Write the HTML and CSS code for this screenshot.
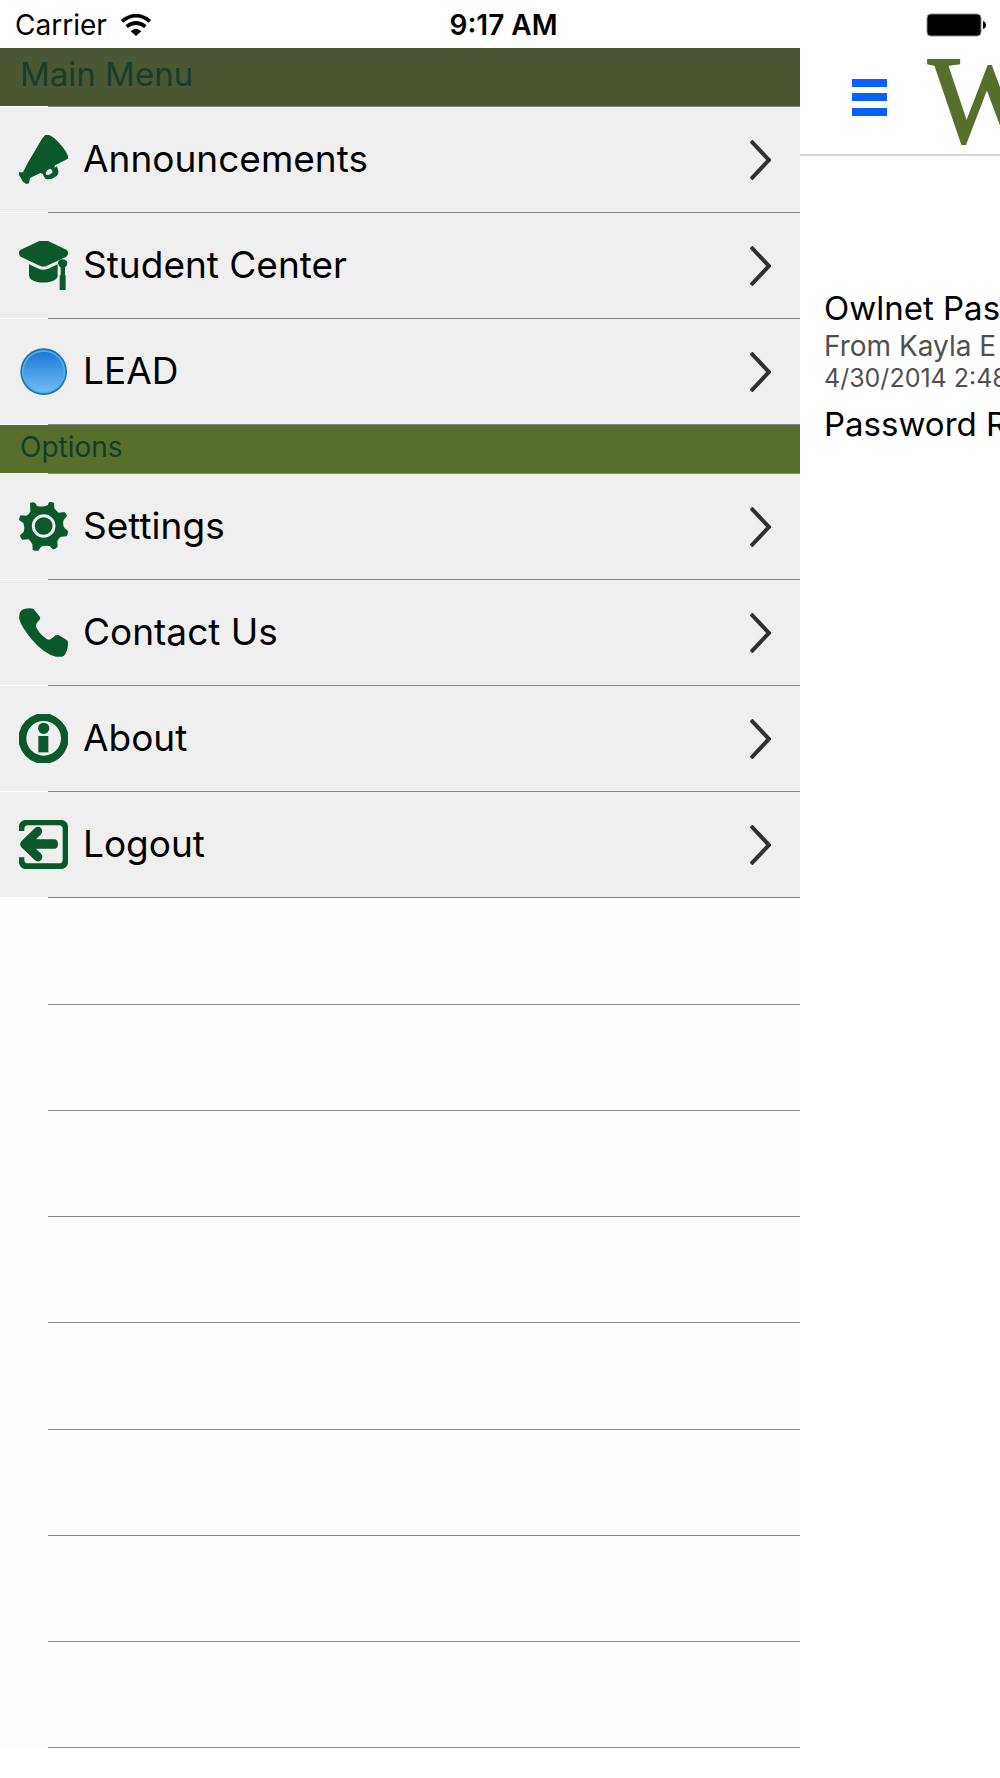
FILE: index.html
```
<!DOCTYPE html>
<html lang="en">
<head>
    <meta charset="UTF-8">
    <meta name="viewport" content="width=device-width, initial-scale=1.0">
    <title>Main Menu</title>
    <link rel="stylesheet" href="styles.css">
</head>
<body>
    <!-- Status bar -->
    <header class="status-bar">
        <div class="carrier">
            <span>Carrier</span>
            <svg class="wifi" viewBox="0 0 90 66" aria-hidden="true">
                <path d="M3 22Q45-12 87 22" fill="none" stroke="#000" stroke-width="11"/>
                <path d="M17 38Q45 16 73 38" fill="none" stroke="#000" stroke-width="11"/>
                <path d="M29 52Q45 36 61 52L45 66Z"/>
            </svg>
        </div>
        <div class="time">9:17 AM</div>
        <svg class="battery" viewBox="0 0 60 24" aria-hidden="true">
            <rect x="1" y="1" width="54" height="22" rx="4" fill="#000" stroke="#888" stroke-width="1"/>
            <path d="M57 8Q60 9 60 12T57 16Z"/>
        </svg>
    </header>

    <div class="screen">
        <!-- Side menu -->
        <nav class="menu">
            <h2 class="section-title main-title">Main Menu</h2>
            <ul class="menu-list">
                <li>
                    <a href="#announcements">
                        <svg class="icon" viewBox="0 0 147 147" aria-hidden="true">
                            <path fill-rule="evenodd" d="M78 0H90Q105 6 124 28Q143 50 147 64V71L108 91L106 98L114 94L118 108Q120 117 113 123Q99 134 84 133Q79 133 76 127L71 117L64 114L33 129L30 145L22 147L12 140L0 120V112H12L26 84L69 11ZM80 113L86 104L96 101L101 111Q98 117 88 120L81 119Z"/>
                        </svg>
                        <span>Announcements</span>
                        <svg class="chevron" viewBox="0 0 21 40" aria-hidden="true"><path d="M1 1L19 20L1 39"/></svg>
                    </a>
                </li>
                <li>
                    <a href="#student-center">
                        <svg class="icon" viewBox="0 0 147 147" aria-hidden="true">
                            <path d="M61 0H87L142 26Q147 29 147 36Q147 44 142 47L84 74Q73 79 62 74L5 47Q0 44 0 36Q0 29 5 26Z"/>
                            <path d="M30 70L61 84Q73 89 86 84L116 70V106Q114 118 94 122Q73 127 52 122Q32 117 30 104Z"/>
                            <path d="M117 67Q117 56 131 55Q145 56 145 68Q144 74 138 79V103H140V147H122V103H125V79Q118 75 117 67Z"/>
                        </svg>
                        <span>Student Center</span>
                        <svg class="chevron" viewBox="0 0 21 40" aria-hidden="true"><path d="M1 1L19 20L1 39"/></svg>
                    </a>
                </li>
                <li>
                    <a href="#lead">
                        <svg class="icon" viewBox="0 0 147 147" aria-hidden="true">
                            <defs>
                                <linearGradient id="blue" x1="0" y1="0" x2="0" y2="1">
                                    <stop offset="0" stop-color="#187ad8"/>
                                    <stop offset="1" stop-color="#70bcf0"/>
                                </linearGradient>
                            </defs>
                            <circle cx="74" cy="74" r="70" fill="#1c70ae"/>
                            <circle cx="74" cy="74" r="65" fill="#58aee8"/>
                            <circle cx="74" cy="74" r="60" fill="url(#blue)"/>
                        </svg>
                        <span>LEAD</span>
                        <svg class="chevron" viewBox="0 0 21 40" aria-hidden="true"><path d="M1 1L19 20L1 39"/></svg>
                    </a>
                </li>
            </ul>

            <h2 class="section-title">Options</h2>
            <ul class="menu-list">
                <li>
                    <a href="#settings">
                        <svg class="icon" viewBox="0 0 147 147" aria-hidden="true">
                            <path d="M33 3Q40-1 48 2L54 12Q72 16 86 10L90 1Q98-1 105 3L106 18Q110 26 119 32L136 30Q142 34 144 42L134 54Q130 66 136 77L147 87Q147 96 143 103L126 104Q118 109 115 117L116 134Q109 142 101 142L92 132Q75 129 66 134L58 146Q49 148 41 143L40 127Q36 117 28 112L10 113Q4 109 3 100L14 90Q18 75 13 63L0 54Q0 46 5 40L22 41Q30 37 34 29Z"/>
                            <circle class="ring" cx="74" cy="72" r="31"/>
                        </svg>
                        <span>Settings</span>
                        <svg class="chevron" viewBox="0 0 21 40" aria-hidden="true"><path d="M1 1L19 20L1 39"/></svg>
                    </a>
                </li>
                <li>
                    <a href="#contact">
                        <svg class="icon" viewBox="0 0 147 147" aria-hidden="true">
                            <path d="M13 4Q28-1 43 2L63 27Q65 33 59 38Q49 47 51 56Q60 77 83 93Q91 98 99 91L110 82Q116 79 124 84L144 97Q149 101 147 111Q145 132 135 143Q128 148 111 146Q75 137 39 95Q8 59 1 34Q-2 11 13 4Z"/>
                        </svg>
                        <span>Contact Us</span>
                        <svg class="chevron" viewBox="0 0 21 40" aria-hidden="true"><path d="M1 1L19 20L1 39"/></svg>
                    </a>
                </li>
                <li>
                    <a href="#about">
                        <svg class="icon" viewBox="0 0 147 147" aria-hidden="true">
                            <path fill-rule="evenodd" d="M54 0H93Q136 17 147 56V91Q133 137 92 147H54Q14 136 0 91V56Q11 15 54 0ZM74 21A52 52 0 1 0 74 125A52 52 0 1 0 74 21Z"/>
                            <circle cx="74" cy="43" r="17"/>
                            <rect x="58" y="66" width="30" height="49"/>
                        </svg>
                        <span>About</span>
                        <svg class="chevron" viewBox="0 0 21 40" aria-hidden="true"><path d="M1 1L19 20L1 39"/></svg>
                    </a>
                </li>
                <li>
                    <a href="#logout">
                        <svg class="icon" viewBox="0 0 147 147" aria-hidden="true">
                            <path d="M0 33V17Q3 3 17 0H130Q144 3 147 17V130Q144 144 130 147H17Q3 144 0 130V112H16V119Q16 130 27 130H120Q131 130 131 119V27Q131 16 120 16H27Q16 16 16 27V33Z"/>
                            <path d="M7 64L48 24Q57 17 66 24Q73 34 66 43L51 58H109Q117 61 117 72Q117 84 109 86H51L67 102Q73 111 67 119Q58 129 48 121L7 82Q0 73 7 64Z"/>
                        </svg>
                        <span>Logout</span>
                        <svg class="chevron" viewBox="0 0 21 40" aria-hidden="true"><path d="M1 1L19 20L1 39"/></svg>
                    </a>
                </li>
            </ul>

            <!-- Empty rows below the menu -->
            <div class="empty-rows" aria-hidden="true">
                <div></div>
                <div></div>
                <div></div>
                <div></div>
                <div></div>
                <div></div>
                <div></div>
                <div></div>
            </div>
        </nav>

        <!-- Page pushed aside by the menu -->
        <main class="page">
            <div class="page-header">
                <button class="menu-button" type="button" aria-label="Menu">
                    <svg viewBox="0 0 35 37" aria-hidden="true">
                        <path d="M0 0H35V8H0ZM0 14H35V22H0ZM0 29H35V37H0Z"/>
                    </svg>
                </button>
                <span class="logo">W</span>
            </div>
            <article class="message">
                <h1>Owlnet Pas</h1>
                <p class="from">From Kayla E</p>
                <p class="date">4/30/2014 2:48</p>
                <p class="text">Password R</p>
            </article>
        </main>
    </div>
</body>
</html>
```
FILE: styles.css
```
* {
    box-sizing: border-box;
}
body {
    margin: 0;
    font-family: Inter, "Liberation Sans", sans-serif;
    background-color: #fff;
    color: #000;
}
h1, h2, p, ul {
    margin: 0;
    padding: 0;
    font-weight: normal;
}
ul {
    list-style: none;
}

/* Status bar */
.status-bar {
    display: grid;
    grid-template-columns: 1fr auto 1fr;
    align-items: center;
    height: 48px;
    padding: 2px 14px 0 15px;
    font-size: 28px;
}
.carrier {
    display: flex;
    align-items: center;
    gap: 14px;
}
.wifi {
    width: 30px;
    height: 22px;
}
.time {
    padding-left: 6px;
    font-weight: 600;
}
.battery {
    width: 60px;
    height: 24px;
    justify-self: end;
}

.screen {
    display: flex;
}

/* Side menu */
.menu {
    width: 80%;
    background-color: #fefefe;
}
.section-title {
    height: 49px;
    padding-left: 20px;
    background-color: #576f2b;
    color: #163c2c;
    font-size: 28px;
    line-height: 45px;
}
.main-title {
    height: 59px;
    background-color: #4a5732;
    font-size: 33px;
    line-height: 52px;
}

/* Divider: white under the icons, grey under the text */
.section-title::after,
.menu-list li::after {
    content: "";
    display: block;
    height: 1px;
    margin-top: -1px;
    background: linear-gradient(to right, #fff 48px, #868686 48px);
}
.section-title::after {
    margin-left: -20px;
    margin-top: 3px;
}
.main-title::after {
    margin-top: 6px;
}
.menu-list a {
    display: flex;
    align-items: center;
    height: 106px;
    padding: 0 29px 1px 19px;
    background-color: #efefef;
    color: #000;
    font-size: 37px;
    line-height: 44px;
    text-decoration: none;
}
.menu-list span {
    padding-bottom: 2px;
}
.icon {
    width: 49px;
    height: 49px;
    margin-right: 15px;
    fill: #0b582d;
}
.ring {
    fill: none;
    stroke: #efefef;
    stroke-width: 9;
}
.chevron {
    width: 21px;
    height: 40px;
    margin-left: auto;
    fill: none;
    stroke: #303030;
    stroke-width: 4;
}
.empty-rows {
    display: grid;
    grid-template-rows: repeat(2, 107px 106px 106px 106px);
}
.empty-rows div {
    margin-left: 48px;
    border-bottom: 1px solid #868686;
}

/* Page */
.page {
    width: 20%;
    overflow: hidden;
    white-space: nowrap;
}
.page-header {
    display: flex;
    align-items: center;
    gap: 41px;
    height: 108px;
    padding-left: 52px;
    border-bottom: 2px solid #d6d6d6;
}
.menu-button {
    flex: none;
    padding: 0;
    border: none;
    background: none;
    cursor: pointer;
}
.menu-button svg {
    display: block;
    width: 35px;
    height: 37px;
    margin-bottom: 7px;
    fill: #0a60ff;
}
.logo {
    color: #576f2b;
    font-family: "Liberation Serif", serif;
    font-size: 124px;
    line-height: 106px;
    -webkit-text-stroke: 2px #576f2b;
}
.message {
    padding: 132px 0 0 24px;
}
.message h1,
.text {
    font-size: 33px;
    line-height: 40px;
}
.from {
    color: #505050;
    font-size: 28px;
    line-height: 36px;
}
.date {
    color: #505050;
    font-size: 25px;
    line-height: 28px;
}
.text {
    margin-top: 12px;
}
```
